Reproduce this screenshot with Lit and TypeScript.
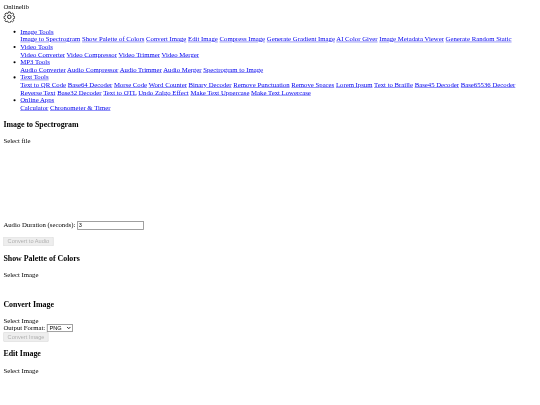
import { LitElement, html, css } from "lit";
import { customElement } from "lit/decorators.js";

const groups: [string, string[]][] = [
  ["Image Tools", ["Image to Spectrogram","Show Palette of Colors","Convert Image","Edit Image","Compress Image","Generate Gradient Image","AI Color Giver","Image Metadata Viewer","Generate Random Static"]],
  ["Video Tools", ["Video Converter","Video Compressor","Video Trimmer","Video Merger"]],
  ["MP3 Tools", ["Audio Converter","Audio Compressor","Audio Trimmer","Audio Merger","Spectrogram to Image"]],
  ["Text Tools", ["Text to QR Code","Base64 Decoder","Morse Code","Word Counter","Binary Decoder","Remove Punctuation","Remove Spaces","Lorem Ipsum","Text to Braille","Base45 Decoder","Base65536 Decoder","Reverse Text","Base32 Decoder","Text to OTL","Undo Zalgo Effect","Make Text Uppercase","Make Text Lowercase"]],
  ["Online Apps", ["Calculator","Chronometer & Timer"]],
];

@customElement("app-root")
export class AppRoot extends LitElement {
  static styles = css`
    :host { display: block; width: 540px; height: 405px; overflow: hidden; background: #fff; }
    .page { transform: scale(0.421875); transform-origin: 0 0; width: 1264px; padding: 8px; font-family: "Liberation Serif", serif; font-size: 16px; color: #000; filter: blur(0.8px); }
    .gear { display: block; width: 28px; height: 28px; }
    ul { margin: 12px 0 19px; padding-left: 40px; }
    a { color: #0000ee; text-decoration: underline; }
    h3 { font-size: 18.72px; font-weight: bold; margin: 18.72px 0; }
    .spectro-space { height: 182px; }
    .gap { margin-top: 16px; }
    .palette-space { height: 31px; }
    .fmt { margin-top: -2px; }
    input { width: 150px; font-size: 13.333px; font-family: "Liberation Sans", sans-serif; border: 2px solid #8f8f8f; box-sizing: content-box; padding: 1px 2px; }
    button { font-family: "Liberation Sans", sans-serif; font-size: 13.333px; padding: 2px 8px; min-height: 21px; }
    select { width: 62px; height: 19px; font-family: "Liberation Sans", sans-serif; font-size: 13.333px; border: 2px solid #8f8f8f; background: #fff; }
  `;

  render() {
    return html`<div class="page">
      <div>Onlinelib</div>
      <svg class="gear" viewBox="0 0 24 24" fill="none" stroke="#000" stroke-width="1.7" stroke-linejoin="round">
        <path d="M10 1.5h4l.7 3 2 .8 2.6-1.6 2.8 2.8-1.6 2.6.8 2 3 .7v4l-3 .7-.8 2 1.6 2.6-2.8 2.8-2.6-1.6-2 .8-.7 3h-4l-.7-3-2-.8-2.6 1.6-2.8-2.8 1.6-2.6-.8-2-3-.7v-4l3-.7.8-2-1.6-2.6 2.8-2.8 2.6 1.6 2-.8z" transform="translate(1.2 0.6) scale(0.9)"/>
        <circle cx="12" cy="12" r="3.6"/>
      </svg>
      <ul>
        ${groups.map(([t, items]) => html`<li><a href="#">${t}</a><br>${items.map((i) => html`<a href="#">${i}</a> `)}</li>`)}
      </ul>
      <h3>Image to Spectrogram</h3>
      <div>Select file</div>
      <div class="spectro-space"></div>
      <div>Audio Duration (seconds): <input type="number" value="3"></div>
      <div class="gap"><button disabled>Convert to Audio</button></div>
      <h3>Show Palette of Colors</h3>
      <div>Select Image</div>
      <div class="palette-space"></div>
      <h3>Convert Image</h3>
      <div>Select Image</div>
      <div class="fmt">Output Format: <select><option>PNG</option></select></div>
      <div><button disabled>Convert Image</button></div>
      <h3>Edit Image</h3>
      <div>Select Image</div>
    </div>`;
  }
}
